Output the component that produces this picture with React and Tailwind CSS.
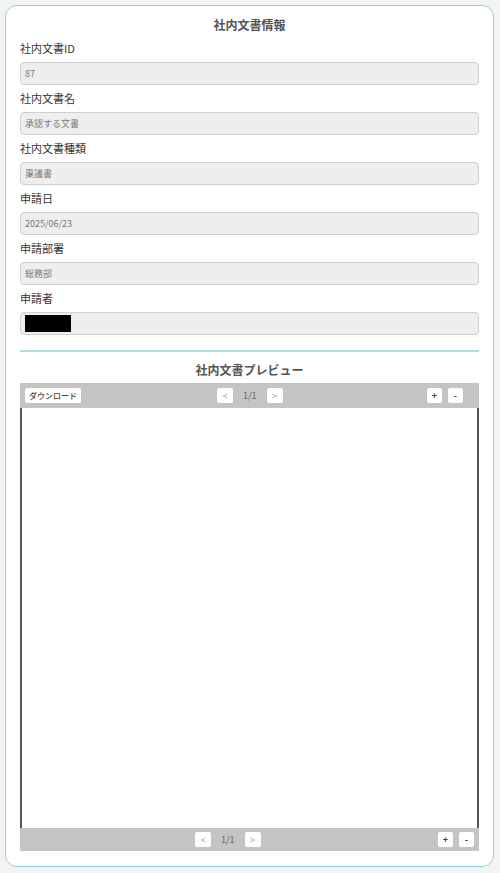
import React from "react";

const font = { fontFamily: '"Noto Sans CJK JP", "Noto Sans", sans-serif' };

function Field({ label, value, redacted }) {
  return (
    <div className="flex flex-col">
      <div className="h-[16px] text-[11px] leading-[16px] text-[#333]">{label}</div>
      <div className="mt-[6px] flex h-[23px] items-center rounded-[4px] border border-[#cfcfcf] bg-[#eeeeee] pl-[4px] text-[9px] text-[#777]">
        {redacted ? <div className="h-[17px] w-[46px] bg-black" /> : value}
      </div>
    </div>
  );
}

function Btn({ children, w = "w-[16px]" }) {
  return (
    <div className={`flex h-[15px] ${w} items-center justify-center rounded-[2px] bg-white text-[9px] leading-none text-[#999]`}>
      {children}
    </div>
  );
}

function Pager() {
  return (
    <div className="flex items-center">
      <Btn>&lt;</Btn>
      <div className="mx-[10px] text-[9px] text-[#666]">1/1</div>
      <Btn>&gt;</Btn>
    </div>
  );
}

function Zoom() {
  return (
    <div className="flex items-center gap-[6px]">
      <Btn w="w-[15px]"><span className="font-bold text-[#444]">+</span></Btn>
      <Btn w="w-[15px]"><span className="font-bold text-[#444]">-</span></Btn>
    </div>
  );
}

export default function App() {
  return (
    <div className="min-h-[873px] w-[500px] bg-[#f3f3f3] pt-[5px] pb-[6px]" style={font}>
      <div className="ml-[5px] flex h-[862px] w-[489px] flex-col rounded-[12px] border-[1.5px] border-[#8fd2d2] bg-white px-[14px] pt-[10px] pb-[15px]">
        <div className="h-[18px] text-center text-[12px] font-bold leading-[18px] text-[#555]">社内文書情報</div>
        <div className="mt-[6px] flex flex-col gap-[5px]">
          <Field label="社内文書ID" value="87" />
          <Field label="社内文書名" value="承認する文書" />
          <Field label="社内文書種類" value="稟議書" />
          <Field label="申請日" value="2025/06/23" />
          <Field label="申請部署" value="総務部" />
          <Field label="申請者" redacted />
        </div>
        <div className="mt-[15px] h-[2px] bg-[#ace0e0]" />
        <div className="mt-[9px] h-[18px] text-center text-[12px] font-bold leading-[18px] text-[#555]">社内文書プレビュー</div>
        <div className="mt-[4px] flex flex-1 flex-col">
          <div className="flex h-[25px] items-center bg-[#c4c4c4]">
            <div className="ml-[5px] flex h-[15px] w-[56px] items-center justify-center rounded-[2px] bg-white text-[8px] font-medium text-[#444]">ダウンロード</div>
            <div className="ml-[136px]"><Pager /></div>
            <div className="ml-auto mr-[16px]"><Zoom /></div>
          </div>
          <div className="flex-1 border-x-2 border-l-[#555] border-r-[#555] bg-white" />
          <div className="flex h-[23px] items-center bg-[#c4c4c4]">
            <div className="ml-[175px]"><Pager /></div>
            <div className="ml-auto mr-[5px]"><Zoom /></div>
          </div>
        </div>
      </div>
    </div>
  );
}
